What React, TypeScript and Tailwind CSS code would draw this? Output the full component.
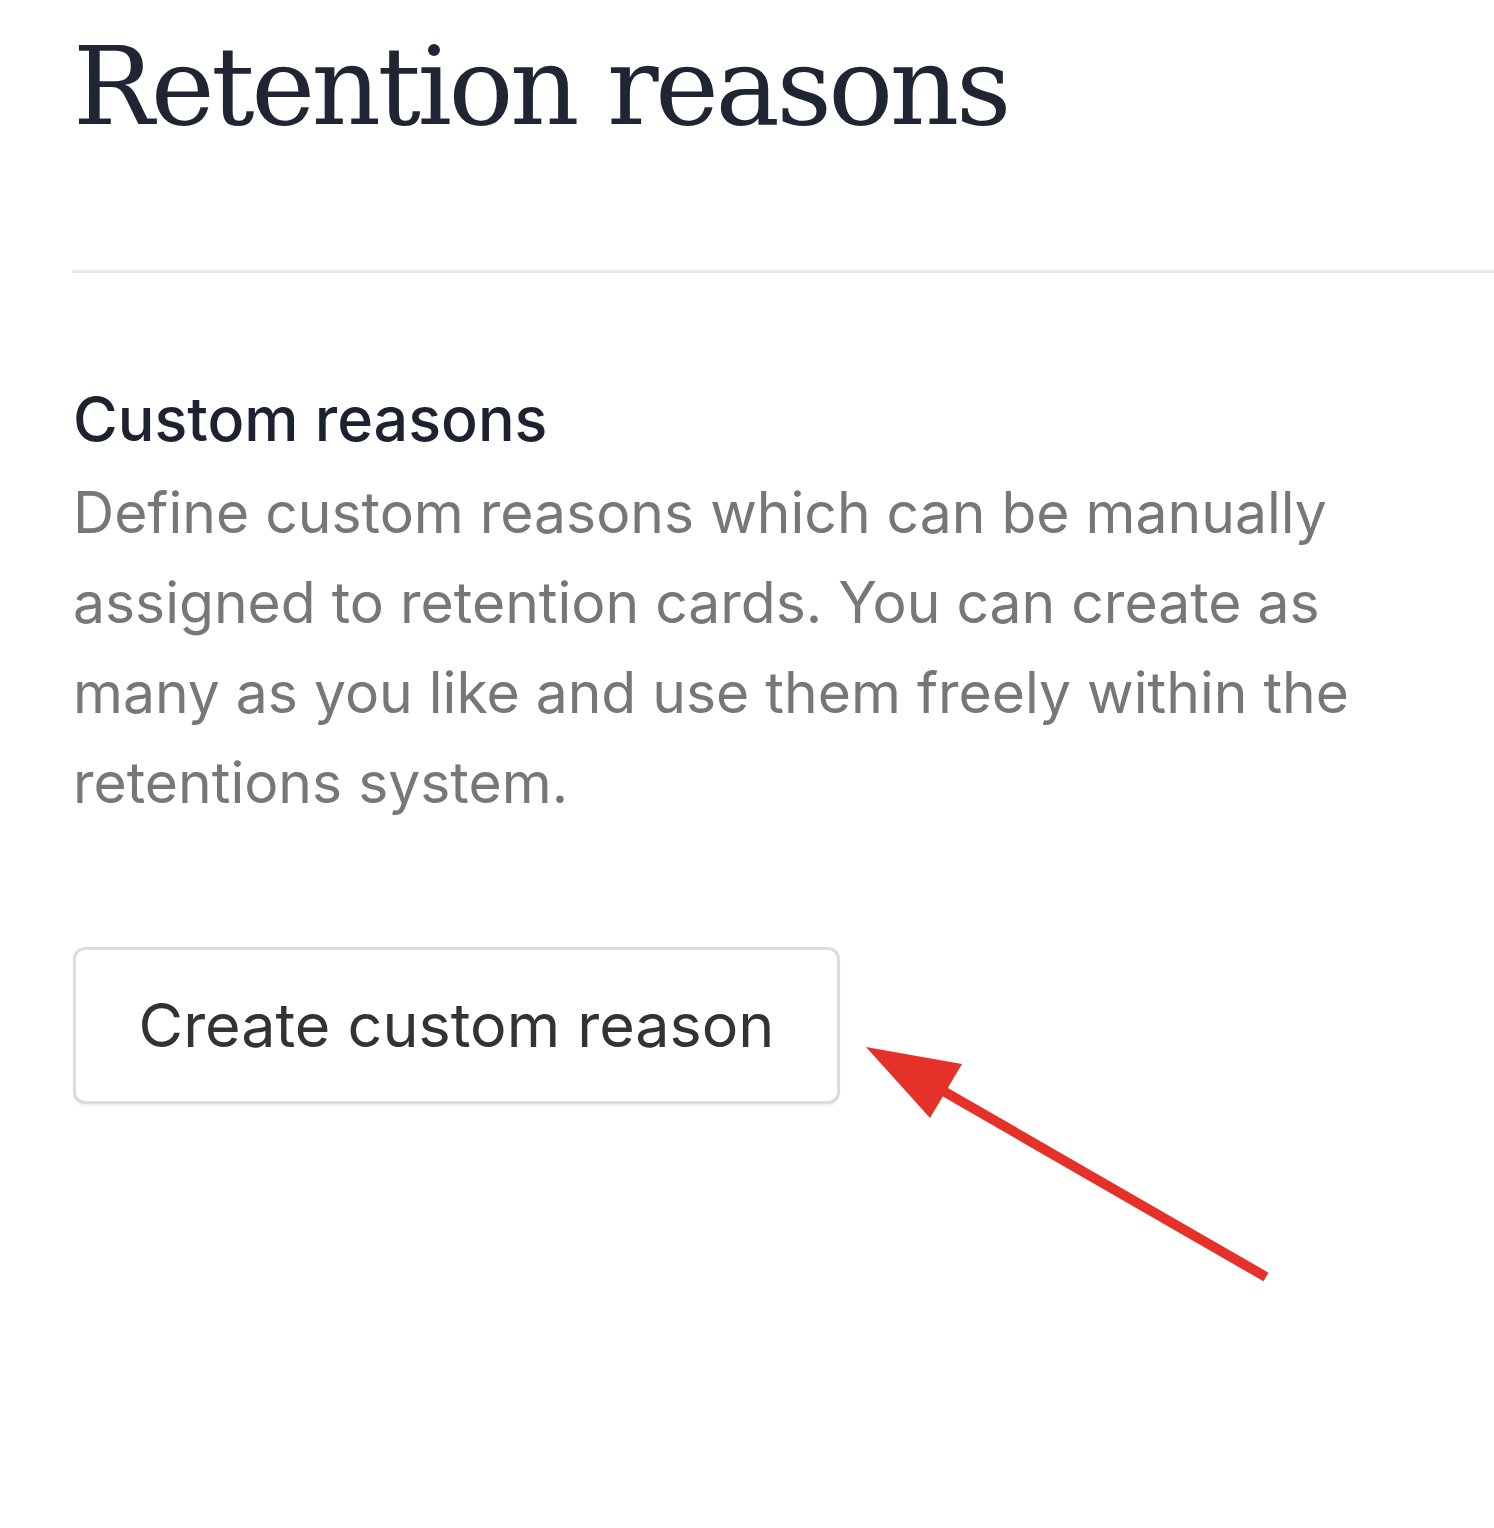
import React from "react";

export default function App() {
  return (
    <div className="relative w-[1494px] h-[1528px] bg-white overflow-hidden">
      <div className="pl-[73px] pt-[22px]">
        <h1
          className="text-[108px] leading-[1.2] text-[#1f2533] tracking-[-3.5px]"
          style={{ fontFamily: '"DejaVu Serif", "Liberation Serif", serif' }}
        >
          Retention reasons
        </h1>
      </div>
      <div className="mt-[118px] ml-[72px] h-[3px] bg-[#ebebeb]" />
      <div
        className="pl-[73px] pt-[107px]"
        style={{ fontFamily: 'Inter, "Noto Sans", sans-serif' }}
      >
        <h2 className="text-[61px] leading-[1.3] font-medium text-[#1c2230]">
          Custom reasons
        </h2>
        <p className="mt-[9px] max-w-[1320px] text-[57px] leading-[90px] text-[#777777]">
          Define custom reasons which can be manually assigned to retention
          cards. You can create as many as you like and use them freely within
          the retentions system.
        </p>
        <button className="mt-[119px] w-[767px] h-[157px] border-[3px] border-[#dcdcdc] rounded-[12px] bg-white text-[61px] text-[#333333] shadow-[0_2px_2px_rgba(0,0,0,0.06)]">
          Create custom reason
        </button>
      </div>
      <svg
        className="absolute left-[850px] top-[1030px]"
        width="440"
        height="270"
        viewBox="0 0 440 270"
      >
        <line
          x1="88"
          y1="58"
          x2="416"
          y2="247"
          stroke="#e5312a"
          strokeWidth="10"
          strokeLinecap="butt"
        />
        <polygon points="16,17 112,34 80,88" fill="#e5312a" />
      </svg>
    </div>
  );
}
